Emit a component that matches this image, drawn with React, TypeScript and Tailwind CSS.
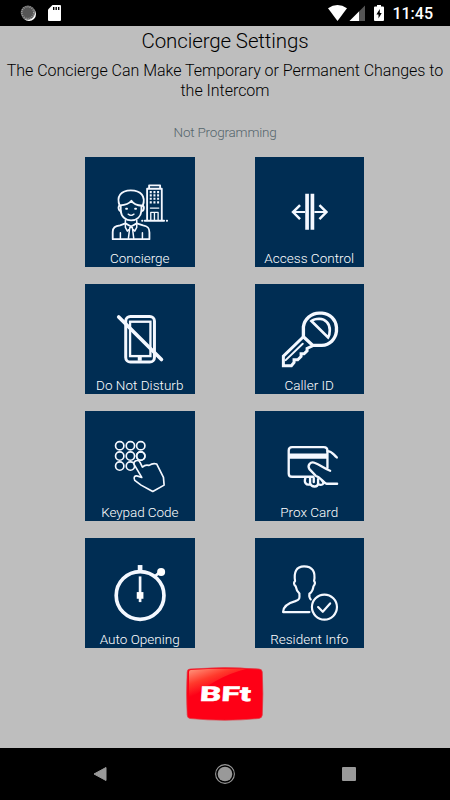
import React from 'react';

interface Tile {
    label: string;
    tracking: string;
    viewBox: string;
    icon: React.ReactNode;
}

const keypadDots = [
    [120, 122], [152, 122], [183, 122],
    [120, 153], [152, 153], [183, 153],
    [120, 183], [152, 183]
];

const windowRows = [127, 137, 147, 158];

const tiles: Tile[] = [
    {
        label: 'Concierge',
        tracking: 'tracking-[0px]',
        viewBox: '16 22 328 328',
        icon: (
            <g strokeWidth="5.5">
                <path d="M120 168 C109 140 124 122 153 122 C184 122 199 140 189 168" />
                <path d="M124 184 C115 184 114 167 121 167 C138 166 149 161 155 153 C160 162 172 167 188 168 C195 170 193 184 185 184" />
                <path d="M123 168 V184 C125 202 139 212 154 212 C171 212 183 201 185 184 V168" />
                <path d="M145 193 Q154 201 163 193" strokeWidth="4" />
                <path d="M139 177 h3 M166 177 h3" />
                <path d="M99 268 V247 C99 233 106 229 121 227 L137 221 L154 230 L171 221 L190 227 C204 229 209 234 209 248 V268 Z" />
                <path d="M137 211 V233 L143 244 L154 231 L165 244 L171 233 V211 M150 234 L146 266 M158 234 L162 266 M122 249 V266 M188 249 V266" strokeWidth="4.5" />
                <path d="M202 213 V117 H246 V213 M208 116 V107 H241 V116 M195 213 H253" />
                <path d="M213 211 V188 H235 V211 M224 190 V211 M212 175 H237" strokeWidth="4" />
                {windowRows.map((y) => (
                    <path key={y} d={`M210 ${y} h6 M221 ${y} h6 M232 ${y} h6`} strokeWidth="6.5" strokeLinecap="butt" />
                ))}
                <path d="M187 213 h1 M261 213 h1" />
            </g>
        )
    },
    {
        label: 'Access Control',
        tracking: 'tracking-[0.03px]',
        viewBox: '15 22 328 328',
        icon: (
            <g strokeLinecap="butt" strokeLinejoin="miter">
                <path d="M171 132 V240 M187 132 V240" strokeWidth="11" />
                <path d="M165 187 H130 M193 187 H228" strokeWidth="6" />
                <path d="M150 166 L129 187 L150 208 M208 166 L229 187 L208 208" strokeWidth="7.5" />
            </g>
        )
    },
    {
        label: 'Do Not Disturb',
        tracking: 'tracking-[0.03px]',
        viewBox: '16 18 328 328',
        icon: (
            <g>
                <rect x="138" y="115" width="86" height="137" rx="14" strokeWidth="9" />
                <rect x="151" y="131" width="61" height="103" strokeWidth="7" strokeLinejoin="miter" />
                <path d="M180 236 V248" strokeWidth="12" strokeLinecap="butt" />
                <path d="M117 117 L245 244" strokeWidth="11" />
            </g>
        )
    },
    {
        label: 'Caller ID',
        tracking: 'tracking-[0px]',
        viewBox: '15 18 328 328',
        icon: (
            <g strokeWidth="10" strokeLinejoin="miter">
                <path d="M160 176 V146 C163 123 184 105 207 105 H216 C241 107 257 126 259 147 V160 C256 184 239 200 215 202 H188 Z" />
                <path d="M184 129 Q192 122 207 122 C227 123 239 137 239 156 Q239 171 234 178 Z" strokeWidth="8" />
                <path d="M160 176 L100 234 V263 H124 L132 253 V245 H143 L153 235 V227 H162 L171 218 V211 L188 203" strokeWidth="9" />
                <path d="M158 197 L107 246" strokeWidth="6" />
            </g>
        )
    },
    {
        label: 'Keypad Code',
        tracking: 'tracking-[-0.08px]',
        viewBox: '16 18 328 328',
        icon: (
            <g strokeWidth="5">
                {keypadDots.map(([cx, cy]) => (
                    <circle key={`${cx}-${cy}`} cx={cx} cy={cy} r="12.5" />
                ))}
                <path
                    d="M179 213 L163 178 C160 168 175 161 181 172 L188 186 C193 181 202 179 208 181 C215 176 225 175 231 177 L251 217 L253 240 L219 259 L208 253 L184 240 L165 226 C160 217 165 210 174 213 L186 217 Z"
                    className="fill-[#002d53]"
                    stroke="none"
                />
                <circle cx="183" cy="153" r="12.5" />
                <path d="M186 217 L163 178 C160 168 175 161 181 172 L188 186 C193 181 202 179 208 181 C215 176 225 175 231 177 L251 217 L253 240 L219 259 L208 253 L184 240 L165 226 C160 217 165 210 174 213 L186 217" />
            </g>
        )
    },
    {
        label: 'Prox Card',
        tracking: 'tracking-[0px]',
        viewBox: '15 18 328 328',
        icon: (
            <g strokeWidth="7">
                <path d="M190 215 H126 Q116 215 116 205 V136 Q116 126 126 126 H221 Q232 126 232 137 V188" />
                <path d="M116 153 H232" strokeWidth="16" strokeLinecap="butt" />
                <path d="M232 138 C246 138 249 148 260 157" />
                <path d="M240 197 C222 190 210 179 193 173 C181 169 171 181 178 192 L197 212 C212 216 218 233 230 236 H261" />
                <path d="M166 218 C161 232 168 241 180 238 M180 218 V235 C185 246 202 248 204 236 V222 M191 219 V231 M204 237 C214 243 225 236 217 228" />
            </g>
        )
    },
    {
        label: 'Auto Opening',
        tracking: 'tracking-[0.03px]',
        viewBox: '16 18 328 328',
        icon: (
            <g strokeLinecap="butt">
                <circle cx="181" cy="190" r="71.5" strokeWidth="11" />
                <path d="M181 99 V117" strokeWidth="14" />
                <path d="M181 133 V210" strokeWidth="8" />
                <rect x="171" y="180" width="20" height="20" fill="white" stroke="none" />
                <path d="M225 133 L242 119" strokeWidth="8" />
                <circle cx="244" cy="120" r="12" fill="white" stroke="none" />
            </g>
        )
    },
    {
        label: 'Resident Info',
        tracking: 'tracking-[0px]',
        viewBox: '15 18 328 328',
        icon: (
            <g strokeWidth="6.5">
                <path d="M178 240 H99 C99 220 118 212 136 207 C149 203 149 199 148 184 C142 178 138 171 137 163 C131 158 130 151 135 147 C131 121 138 103 162 103 C187 103 197 119 192 147 C196 151 194 158 190 163 C189 172 184 181 178 185 C177 192 178 198 182 202" />
                <circle cx="223" cy="225" r="37.5" />
                <path d="M204 225 L218 239 L240 214" />
            </g>
        )
    }
];

const StatusBar: React.FC = () => (
    <header className="flex h-[26px] shrink-0 items-center justify-between bg-black pl-5 pr-[17px]">
        <div className="flex items-center gap-3">
            <svg viewBox="0 0 16 16" className="h-4 w-4">
                <circle cx="9" cy="9" r="7" fill="white" />
                <circle cx="7.8" cy="7.6" r="7.2" fill="#555" />
                <circle cx="7.8" cy="7.6" r="6" fill="none" stroke="#a5a5a5" strokeWidth="1.6" strokeDasharray="0.9 1.2" />
            </svg>
            <svg viewBox="0 0 13 16" className="h-4 w-[13px]">
                <path d="M4.5 0 H12 Q13 0 13 1 V15 Q13 16 12 16 H1 Q0 16 0 15 V4.5 Z" fill="white" />
                <path d="M5.7 2 v3 M8.2 2 v3 M10.7 2 v3" stroke="black" strokeWidth="1.4" />
            </svg>
        </div>
        <div className="flex items-center">
            <svg viewBox="0 0 19 16" className="h-4 w-[19px]">
                <path d="M0 3.2 Q9.5 -3.2 19 3.2 L9.5 16 Z" fill="white" />
            </svg>
            <svg viewBox="0 0 16 16" className="ml-[2.5px] h-4 w-4">
                <path d="M16 0.5 V16 H0.5 Z" fill="#555" />
                <path d="M10 6.5 V16 H0.5 Z" fill="white" />
            </svg>
            <svg viewBox="0 0 10 16" className="ml-[9px] h-4 w-[10px]">
                <path d="M3 0 H7 V1.5 H9 Q10 1.5 10 2.5 V15 Q10 16 9 16 H1 Q0 16 0 15 V2.5 Q0 1.5 1 1.5 H3 Z" fill="white" />
                <path d="M5.8 4 L2.4 9.4 H4.5 V13.4 L7.7 8 H5.8 Z" fill="black" />
            </svg>
            <span className="ml-2 mt-[2px] font-['Roboto'] text-[16px] font-medium leading-none text-white">11:45</span>
        </div>
    </header>
);

const TileButton: React.FC<{ tile: Tile }> = ({ tile }) => (
    <button className="relative flex h-[109.5px] w-[109.5px] items-end justify-center bg-[#002d53]">
        <svg
            viewBox={tile.viewBox}
            fill="none"
            stroke="#f4f8ff"
            strokeLinecap="round"
            strokeLinejoin="round"
            className="absolute inset-0 h-full w-full"
        >
            {tile.icon}
        </svg>
        <span className={`relative mb-px whitespace-nowrap text-[13.5px] leading-4 text-white ${tile.tracking}`}>{tile.label}</span>
    </button>
);

const BftLogo: React.FC = () => (
    <svg viewBox="0 0 78 54" className="h-[54px] w-[78px]">
        <defs>
            <linearGradient id="shine" x1="0" y1="0" x2="0.45" y2="0.7">
                <stop offset="0" stopColor="#ff9a80" />
                <stop offset="0.5" stopColor="#ff3a2c" />
                <stop offset="0.9" stopColor="#fe0016" />
            </linearGradient>
        </defs>
        <path d="M4 2 Q39 -1 73 2 Q76 2 76.3 5 Q77.5 27 76.3 48 Q76 51 73 51.5 Q39 55 4 51.5 Q1.3 51 1.2 48 Q0 27 1.2 5 Q1.3 2 4 2 Z" fill="#fe0016" stroke="#dd4049" strokeWidth="0.7" />
        <path d="M5 3 Q30 1 60 2 Q28 10 3 34 V5 Q3 3 5 3 Z" fill="url(#shine)" />
        <text
            x="16"
            y="34"
            textLength="51"
            lengthAdjust="spacingAndGlyphs"
            transform="skewX(-4)"
            fill="white"
            stroke="white"
            strokeWidth="0.5"
            className="font-['Roboto'] text-[20.5px] font-extrabold"
        >
            BFt
        </text>
    </svg>
);

const App: React.FC = () => {
    return (
        <div className="flex h-[800px] w-[450px] flex-col overflow-hidden bg-[#bebebe] font-['Roboto','Open_Sans',sans-serif] font-light text-black">
            <StatusBar />

            <main className="flex flex-1 flex-col items-center">
                <h1 className="mt-[3px] text-[20.5px] leading-6 tracking-[-0.12px]">Concierge Settings</h1>
                <p className="mt-2 whitespace-nowrap text-center text-[16px] leading-5 tracking-[-0.02px]">
                    The Concierge Can Make Temporary or Permanent Changes to
                    <br />
                    the Intercom
                </p>
                <p className="mt-[21px] text-[13.5px] leading-5 tracking-[-0.2px] text-[#55656c]">Not Programming</p>

                <div className="mr-px mt-[15px] grid grid-cols-2 gap-x-[60px] gap-y-[17.5px]">
                    {tiles.map((tile) => (
                        <TileButton key={tile.label} tile={tile} />
                    ))}
                </div>

                <div className="mt-[19px]">
                    <BftLogo />
                </div>
            </main>

            <nav className="flex h-[52px] shrink-0 items-center justify-between bg-black pl-[93px] pr-[94px]">
                <svg viewBox="0 0 14 16" className="h-4 w-[14px]">
                    <path d="M13 1.5 V14.5 L1 8 Z" fill="#999" stroke="#999" strokeLinejoin="round" />
                </svg>
                <svg viewBox="0 0 20 20" className="h-5 w-5">
                    <circle cx="10" cy="10" r="9.4" fill="none" stroke="#999" strokeWidth="1.1" />
                    <circle cx="10" cy="10" r="7.3" fill="#999" />
                </svg>
                <svg viewBox="0 0 14 14" className="h-[14px] w-[14px]">
                    <rect width="14" height="14" rx="1" fill="#999" />
                </svg>
            </nav>
        </div>
    );
};

export default App;
